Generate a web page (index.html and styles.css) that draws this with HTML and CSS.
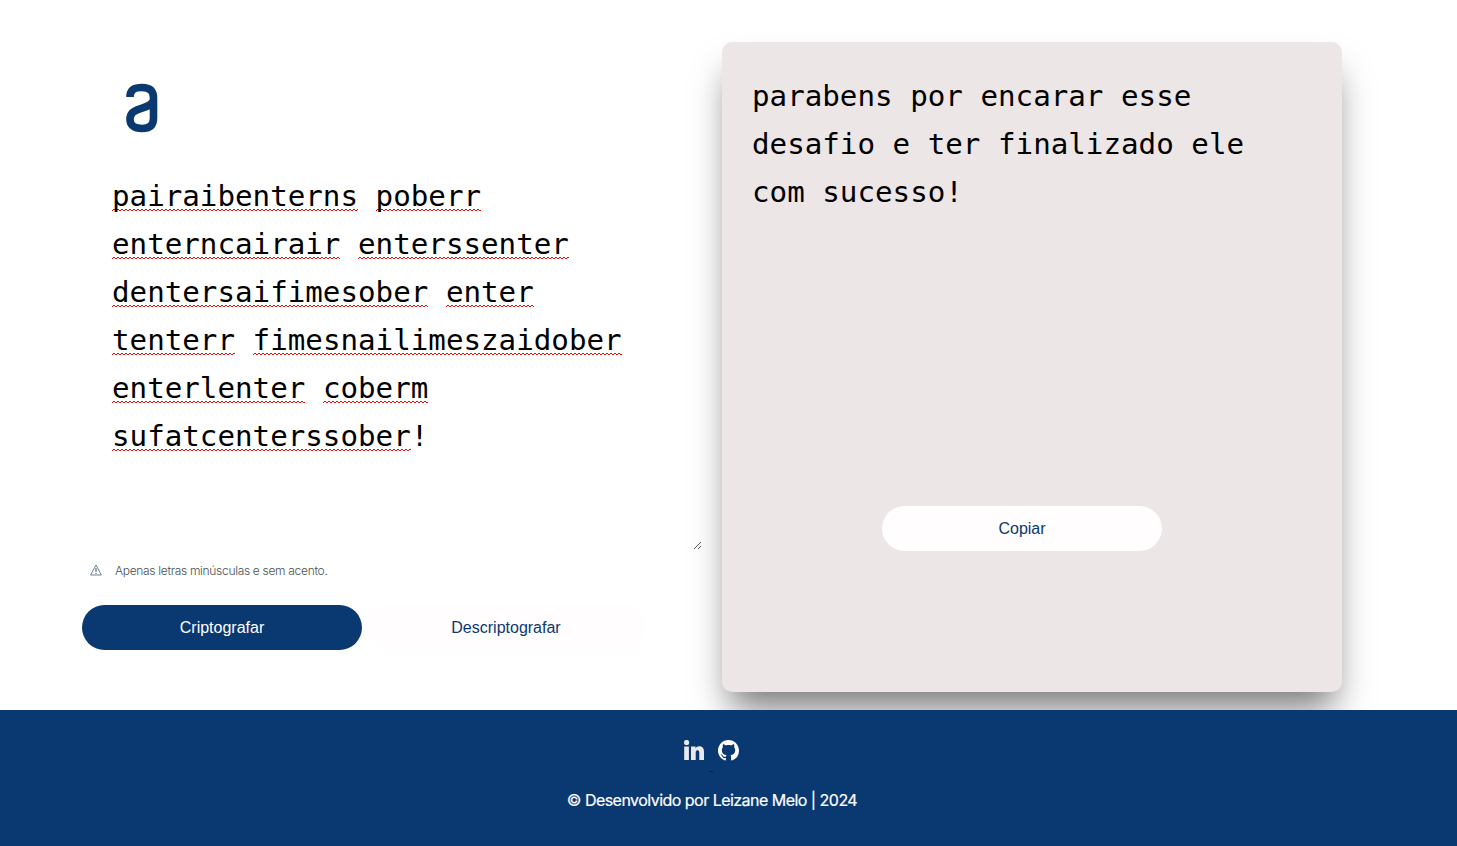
FILE: index.html
```html
<!DOCTYPE html>
<html lang="pt-br">
<head>
<meta charset="utf-8">
<title>Decodificador de texto</title>
<link rel="stylesheet" href="styles.css">
</head>
<body>
<main class="main">
  <section class="entry">
    <svg class="logo" width="34" height="50" viewBox="0 0 34 50" fill="none"><path d="M5 14C5 7 9 4.500 17 4.500C25 4.500 28.500 8 28.500 15V35C28.500 42 25 45.500 17 45.500C9 45.500 5 42 5 36.500C5 30.500 8 28 15 25.800C21 23.900 27 22.500 28.500 17" stroke="#0a3871" stroke-width="7.600"/></svg>
    <div class="field">
      <p class="text"><span class="miss">pairaibenterns</span> <span class="miss">poberr</span><br><span class="miss">enterncairair</span> <span class="miss">enterssenter</span><br><span class="miss">dentersaifimesober</span> <span class="miss">enter</span><br><span class="miss">tenterr</span> <span class="miss">fimesnailimeszaidober</span><br><span class="miss">enterlenter</span> <span class="miss">coberm</span><br><span class="miss">sufatcenterssober</span>!</p>
      <svg class="grip" width="9" height="9" viewBox="0 0 9 9" stroke="#555" fill="none"><path d="M1 8L8 1M5 8L8 5"/></svg>
    </div>
    <p class="note"><svg width="12" height="12" viewBox="0 0 12 12" fill="none" stroke="#718096"><path d="M6 1L11.400 11H.6Z"/><path d="M6 4V8M6 9V10" stroke="#495057"/></svg><span>Apenas letras minúsculas e sem acento.</span></p>
    <div class="actions">
      <button class="btn primary">Criptografar</button>
      <button class="btn">Descriptografar</button>
    </div>
  </section>
  <section class="result">
    <p class="text">parabens por encarar esse<br>desafio e ter finalizado ele<br>com sucesso!</p>
    <button class="btn copy">Copiar</button>
  </section>
</main>
<footer class="footer">
  <div class="social">
    <svg width="20" height="20" viewBox="0 0 20 20" fill="#e9e9ee"><circle cx="2.600" cy="2.500" r="2.600"/><path d="M.2 6.500H4.900V20H.2ZM7 6.500H11.500V8.300C12.200 7.100 13.500 6.200 15.200 6.200C19 6.200 20 8.700 20 12V20H15.300V13.200C15.300 11.500 15 10.300 13.500 10.300S11.700 11.500 11.700 13.200V20H7Z"/></svg>
    <i class="gap-line"></i>
    <svg width="21" height="21" viewBox="0 0 16 16" fill="#fff"><path d="M8 0C3.580 0 0 3.580 0 8c0 3.540 2.290 6.530 5.470 7.590.4.070.55-.17.55-.38 0-.19-.01-.82-.01-1.490-2.010.37-2.530-.49-2.690-.94-.09-.23-.48-.94-.82-1.130-.28-.15-.68-.52-.01-.53.63-.01 1.080.58 1.230.82.72 1.210 1.870.87 2.330.66.07-.52.28-.87.51-1.070-1.780-.2-3.640-.89-3.640-3.950 0-.87.31-1.590.82-2.150-.08-.2-.36-1.020.08-2.120 0 0 .67-.21 2.200.82.64-.18 1.320-.27 2-.27s1.360.09 2 .27c1.530-1.040 2.200-.82 2.200-.82.44 1.100.16 1.920.08 2.120.51.56.82 1.270.82 2.150 0 3.070-1.870 3.750-3.650 3.950.29.25.54.73.54 1.480 0 1.070-.01 1.930-.01 2.200 0 .21.15.46.55.38A8.010 8.010 0 0 0 16 8c0-4.420-3.580-8-8-8Z"/></svg>
  </div>
  <p class="credit">© Desenvolvido por Leizane Melo | 2024</p>
</footer>
</body>
</html>
```
FILE: styles.css
```css
* { box-sizing: border-box; margin: 0; padding: 0; }
body { height: 846px; overflow: hidden; background: #fff; font-family: Inter, sans-serif; display: flex; flex-direction: column; }
.main { height: 710px; padding: 42px 115px 0 82px; display: flex; gap: 20px; }
.entry { width: 620px; padding-top: 41px; }
.logo { display: block; margin-left: 43px; }
.field { position: relative; height: 418px; padding: 39px 30px 0; }
.text { font: 29.2px/48px "DejaVu Sans Mono", monospace; color: #000; white-space: nowrap; }
.miss { background: url("data:image/svg+xml,%3Csvg xmlns='http://www.w3.org/2000/svg' width='4' height='4'%3E%3Cpath d='M-1 2L0 3L2 1L4 3L5 2' fill='none' stroke='red' stroke-width='1'/%3E%3C/svg%3E") repeat-x left calc(100% - 1px); }
.grip { position: absolute; right: 0; bottom: 1px; }
.note { display: flex; align-items: center; gap: 13px; height: 20px; margin: 9px 0 0 8px; font-size: 12px; font-weight: 300; letter-spacing: -.31px; color: #495057; }
.actions { display: flex; gap: 4px; margin-top: 25px; }
.btn { width: 280px; height: 45px; border: 0; border-radius: 24px; background: #fffdfe; color: #0a3871; font: 16px "Liberation Sans", Arial, sans-serif; }
.primary { background: #0a3871; color: #fff; }
.result { width: 620px; height: 650px; border-radius: 10px; background: #ece6e6; padding: 30px; box-shadow: 0 24px 36px -8px rgba(0,0,0,.53); }
.copy { display: block; margin: 290px 0 0 130px; }
.footer { position: relative; height: 136px; background: #0a3871; padding: 30px 33px 0 0; color: #fff; text-align: center; }
.social { display: flex; justify-content: center; gap: 5px; height: 40px; padding-right: 1px; }
.gap-line { width: 4px; height: 1px; margin-top: 31px; background: #0000ee; }
.credit { font-size: 16px; line-height: 24px; margin-top: 8px; letter-spacing: -.53px; -webkit-text-stroke: .2px #fff; }
```
